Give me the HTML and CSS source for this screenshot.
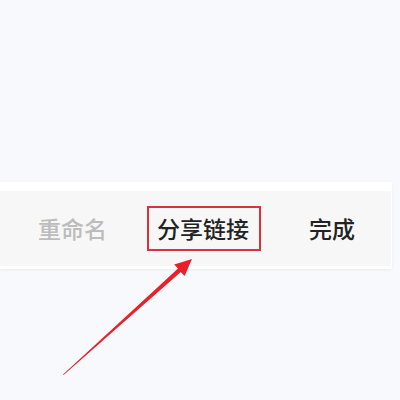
FILE: index.html
```html
<!DOCTYPE html>
<html lang="zh">
<head>
<meta charset="utf-8">
<link rel="stylesheet" href="styles.css">
</head>
<body>
<div class="page">
  <div class="card">
    <div class="bar">
      <span class="item disabled">重命名</span>
      <span class="item active"><span class="boxed">分享链接</span></span>
      <span class="item done">完成</span>
    </div>
  </div>
  <svg class="arrow" width="400" height="400" viewBox="0 0 400 400">
    <polygon points="63,374.5 178,268.6 174.2,264.5 192,259 184.6,276 180.8,272 63.6,375" fill="#e8202a"/>
  </svg>
</div>
</body>
</html>
```
FILE: styles.css
```css
html, body {
  margin: 0;
  padding: 0;
  background: #f8f9fc;
}
.page {
  position: relative;
  width: 400px;
  height: 400px;
  overflow: hidden;
  padding-top: 182px;
  box-sizing: border-box;
}
.card {
  width: 392px;
  box-sizing: border-box;
  background: #ffffff;
  padding: 9px 1px 3px 0;
  box-shadow: 0 1px 3px rgba(0, 0, 0, 0.06);
}
.bar {
  height: 75px;
  background: #f7f7f7;
  display: flex;
  align-items: center;
  padding-left: 38px;
  font-family: "Noto Sans CJK SC", "Noto Sans", sans-serif;
  font-size: 23px;
  font-weight: 500;
  line-height: 1;
}
.item {
  display: flex;
  align-items: center;
}
.disabled {
  color: #bcbcbc;
  margin-right: 40px;
}
.boxed {
  display: flex;
  align-items: center;
  height: 41px;
  padding: 0 10px 0 8px;
  border: 2px solid #d8333c;
  color: #222222;
}
.active {
  margin-right: 48px;
}
.done {
  color: #222222;
}
.arrow {
  position: absolute;
  left: 0;
  top: 0;
}
```
